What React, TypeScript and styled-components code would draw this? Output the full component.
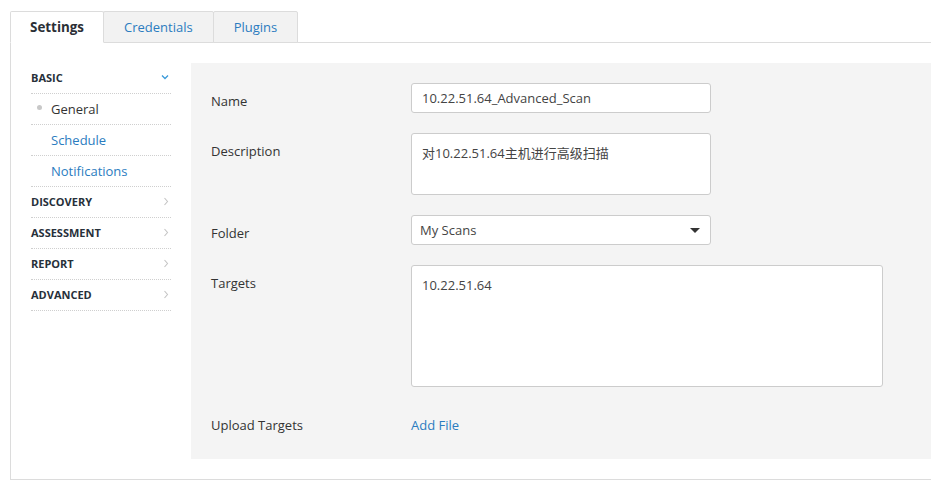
import React from "react";
import styled, { createGlobalStyle } from "styled-components";

const Global = createGlobalStyle`
  html, body { margin: 0; padding: 0; background: #fff; overflow: hidden; }
  body { font-family: "Open Sans", "Noto Sans CJK SC", sans-serif; font-size: 13px; color: #333; }
  * { box-sizing: border-box; }
`;

const Page = styled.div`
  width: 980px;
  padding: 11px 0 0 10px;
`;

const TabBar = styled.div`
  display: flex;
  position: relative;
  z-index: 1;
  margin-bottom: -1px;
`;

const Tab = styled.div<{ $active?: boolean }>`
  height: 32px;
  padding: 0 ${(p) => (p.$active ? "19px" : "20px")};
  display: flex;
  align-items: center;
  border: 1px solid #dcdcdc;
  border-radius: 2px 2px 0 0;
  margin-left: -1px;
  &:first-child { margin-left: 0; }
  background: ${(p) => (p.$active ? "#fff" : "#f2f2f2")};
  border-bottom-color: ${(p) => (p.$active ? "#fff" : "#dcdcdc")};
  color: ${(p) => (p.$active ? "#2b2f36" : "#2b7cc0")};
  font-size: ${(p) => (p.$active ? "13.4px" : "13px")};
  font-weight: ${(p) => (p.$active ? 700 : 400)};
  position: relative;
  z-index: ${(p) => (p.$active ? 2 : 1)};
`;

const Panel = styled.div`
  border: 1px solid #dcdcdc;
  padding: 20px;
  display: flex;
  gap: 20px;
`;

const Sidebar = styled.nav`
  width: 140px;
  flex: none;
`;

const SideRow = styled.div`
  height: 31px;
  border-bottom: 1px dotted #cfcfcf;
  display: flex;
  align-items: center;
`;

const SectionRow = styled(SideRow)`
  justify-content: space-between;
  font-size: 11px;
  font-weight: 700;
  color: #27303a;
  text-transform: uppercase;
  padding-right: 2px;
  padding-bottom: 2px;
`;

const SubRow = styled(SideRow)<{ $active?: boolean }>`
  color: ${(p) => (p.$active ? "#333" : "#2b7cc0")};
  font-size: 13px;
`;

const Marker = styled.span`
  width: 20px;
  flex: none;
  display: flex;
  align-items: center;
  padding-left: 6px;
`;

const Dot = styled.span`
  width: 5px;
  height: 5px;
  border-radius: 50%;
  background: #c8c8c8;
  margin-top: -4px;
`;

const FormArea = styled.div`
  flex: 1;
  background: #f4f4f4;
  padding: 20px;
`;

const FieldRow = styled.div<{ $last?: boolean }>`
  display: flex;
  margin-bottom: ${(p) => (p.$last ? "0" : "20px")};
  min-height: ${(p) => (p.$last ? "32px" : "0")};
`;

const Label = styled.div`
  width: 200px;
  flex: none;
  padding-top: 9px;
  line-height: 18px;
  color: #333;
`;

const TextInput = styled.input`
  width: 300px;
  height: 30px;
  border: 1px solid #ccc;
  border-radius: 3px;
  padding: 0 10px;
  font: inherit;
  font-size: 13px;
  color: #444;
  background: #fff;
  outline: none;
`;

const TextArea = styled.textarea<{ $w: number; $h: number }>`
  width: ${(p) => p.$w}px;
  height: ${(p) => p.$h}px;
  border: 1px solid #ccc;
  border-radius: 3px;
  padding: 9px 10px;
  font: inherit;
  font-size: 13px;
  line-height: 20px;
  color: #444;
  background: #fff;
  resize: none;
  outline: none;
`;

const Select = styled.div`
  width: 300px;
  height: 30px;
  border: 1px solid #ccc;
  border-radius: 3px;
  padding: 0 10px 0 8px;
  background: #fff;
  color: #444;
  display: flex;
  align-items: center;
  justify-content: space-between;
`;

const Caret = styled.span`
  width: 0;
  height: 0;
  border-left: 5px solid transparent;
  border-right: 5px solid transparent;
  border-top: 5px solid #333;
`;

const LinkText = styled.a`
  color: #2b7cc0;
  text-decoration: none;
  padding-top: 9px;
  line-height: 18px;
  cursor: pointer;
`;

const ChevronDown = () => (
  <svg width="8" height="6" viewBox="0 0 8 6">
    <polyline points="1,1.5 4,4.5 7,1.5" fill="none" stroke="#3a9ad9" strokeWidth="1.3" />
  </svg>
);

const ChevronRight = () => (
  <svg width="6" height="9" viewBox="0 0 6 9">
    <polyline points="1.5,1 4.5,4.5 1.5,8" fill="none" stroke="#c4c4c4" strokeWidth="1.1" />
  </svg>
);

const sections = ["Discovery", "Assessment", "Report", "Advanced"];

export default function App() {
  return (
    <>
      <Global />
      <Page>
        <TabBar>
          <Tab $active>Settings</Tab>
          <Tab>Credentials</Tab>
          <Tab>Plugins</Tab>
        </TabBar>
        <Panel>
          <Sidebar>
            <SectionRow>
              <span>Basic</span>
              <ChevronDown />
            </SectionRow>
            <SubRow $active>
              <Marker>
                <Dot />
              </Marker>
              General
            </SubRow>
            <SubRow>
              <Marker />
              Schedule
            </SubRow>
            <SubRow>
              <Marker />
              Notifications
            </SubRow>
            {sections.map((s) => (
              <SectionRow key={s}>
                <span>{s}</span>
                <ChevronRight />
              </SectionRow>
            ))}
          </Sidebar>
          <FormArea>
            <FieldRow>
              <Label>Name</Label>
              <TextInput readOnly defaultValue="10.22.51.64_Advanced_Scan" />
            </FieldRow>
            <FieldRow>
              <Label>Description</Label>
              <TextArea $w={300} $h={62} readOnly defaultValue="对10.22.51.64主机进行高级扫描" />
            </FieldRow>
            <FieldRow>
              <Label>Folder</Label>
              <Select>
                <span>My Scans</span>
                <Caret />
              </Select>
            </FieldRow>
            <FieldRow>
              <Label>Targets</Label>
              <TextArea $w={472} $h={122} readOnly defaultValue="10.22.51.64" />
            </FieldRow>
            <FieldRow $last>
              <Label>Upload Targets</Label>
              <LinkText>Add File</LinkText>
            </FieldRow>
          </FormArea>
        </Panel>
      </Page>
    </>
  );
}
